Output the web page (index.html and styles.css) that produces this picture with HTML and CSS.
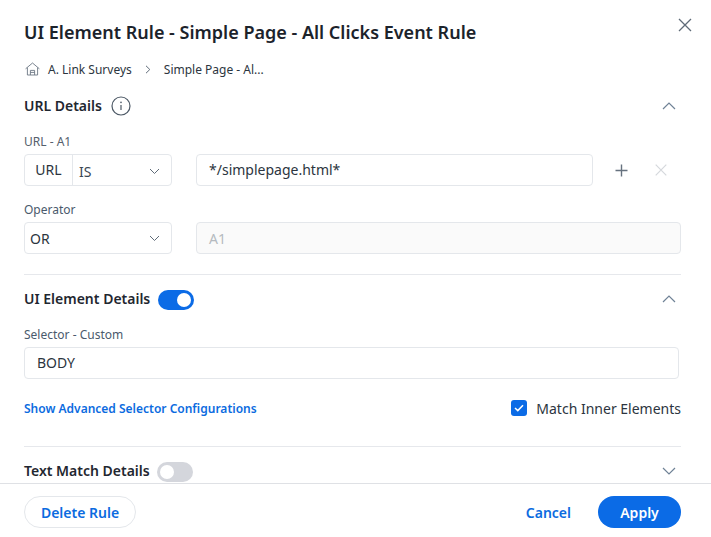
FILE: index.html
```html
<!DOCTYPE html>
<html lang="en">
<head>
<meta charset="utf-8">
<title>UI Element Rule</title>
<link rel="stylesheet" href="styles.css">
</head>
<body>
<div class="modal">
  <main class="content">
    <header class="head">
      <h1 class="title">UI Element Rule - Simple Page - All Clicks Event Rule</h1>
      <button class="close" aria-label="Close">
        <svg width="14" height="14" viewBox="0 0 14 14"><path d="M1 1l12 12M13 1L1 13" stroke="#5f6b78" stroke-width="1.3" fill="none"/></svg>
      </button>
    </header>
    <nav class="crumbs">
      <svg class="home" width="15" height="14" viewBox="0 0 15 14" fill="none" stroke="#6b7683" stroke-width="0.9"><path d="M0.6 6.8L7.5 1l6.9 5.8"/><path d="M2.4 5.6v7.4h10.2V5.6"/><path d="M5.4 13V8.4h4.2V13"/><path d="M5.4 10.4h4.2"/></svg>
      <span>A. Link Surveys</span>
      <svg class="crumb-sep" width="6" height="9" viewBox="0 0 6 9" fill="none" stroke="#5f6b78" stroke-width="1"><path d="M1 .8l3.8 3.7L1 8.2"/></svg>
      <span>Simple Page - Al...</span>
    </nav>

    <section class="section url-section">
      <div class="sec-head">
        <h2 class="sec-title">URL Details</h2>
        <svg class="info" width="20" height="20" viewBox="0 0 20 20" fill="none"><circle cx="10" cy="10" r="9" stroke="#4d5966" stroke-width="1.2"/><path d="M10 9v5" stroke="#4d5966" stroke-width="1.2"/><circle cx="10" cy="6.4" r=".8" fill="#4d5966"/></svg>
        <svg class="chev" width="14" height="8" viewBox="0 0 14 8" fill="none"><path d="M1 7l6-6 6 6" stroke="#6f8296" stroke-width="1.2"/></svg>
      </div>
      <label class="label first-label">URL - A1</label>
      <div class="row url-row">
        <div class="combo">
          <span class="combo-tag">URL</span>
          <span class="combo-value">IS<svg width="11" height="7" viewBox="0 0 11 7" fill="none"><path d="M1 1l4.5 4.5L10 1" stroke="#5f6b78" stroke-width="1"/></svg></span>
        </div>
        <div class="field url-field">*/simplepage.html*</div>
        <svg class="plus" width="13" height="13" viewBox="0 0 13 13" fill="none"><path d="M6.5 0.5v12M0.5 6.5h12" stroke="#66727f" stroke-width="1.4"/></svg>
        <svg class="remove" width="12" height="12" viewBox="0 0 12 12" fill="none"><path d="M.7.7l10.6 10.6M11.3.7L.7 11.3" stroke="#d5d8dc" stroke-width="1.2"/></svg>
      </div>
      <label class="label op-label">Operator</label>
      <div class="row">
        <div class="select">OR<svg width="11" height="7" viewBox="0 0 11 7" fill="none"><path d="M1 1l4.5 4.5L10 1" stroke="#5f6b78" stroke-width="1"/></svg></div>
        <div class="field disabled">A1</div>
      </div>
    </section>

    <section class="section ui-section">
      <div class="sec-head">
        <h2 class="sec-title">UI Element Details</h2>
        <span class="toggle on"><i></i></span>
        <svg class="chev" width="14" height="8" viewBox="0 0 14 8" fill="none"><path d="M1 7l6-6 6 6" stroke="#6f8296" stroke-width="1.2"/></svg>
      </div>
      <label class="label selector-label">Selector - Custom</label>
      <div class="field body-field">BODY</div>
      <div class="adv-row">
        <a class="adv-link">Show Advanced Selector Configurations</a>
        <label class="check">
          <span class="box"><svg width="10" height="8" viewBox="0 0 10 8" fill="none"><path d="M1 4l2.8 2.6L9 1.2" stroke="#fff" stroke-width="1.5"/></svg></span>
          Match Inner Elements
        </label>
      </div>
    </section>

    <section class="section text-section">
      <div class="sec-head">
        <h2 class="sec-title">Text Match Details</h2>
        <span class="toggle off"><i></i></span>
        <svg class="chev" width="14" height="8" viewBox="0 0 14 8" fill="none"><path d="M1 1l6 6 6-6" stroke="#6f8296" stroke-width="1.2"/></svg>
      </div>
    </section>
  </main>
  <footer class="foot">
    <button class="btn ghost">Delete Rule</button>
    <div class="foot-right">
      <button class="btn text">Cancel</button>
      <button class="btn primary">Apply</button>
    </div>
  </footer>
</div>
</body>
</html>
```
FILE: styles.css
```css
* { box-sizing: border-box; }
html, body { margin: 0; height: 100%; background: #fff; }
body { font-family: "Noto Sans", sans-serif; color: #1f2730; overflow: hidden; }
.modal { width: 711px; height: 537px; display: flex; flex-direction: column; }
.content { height: 483px; overflow: hidden; padding: 0 30px 0 24px; }
.head { display: flex; align-items: center; justify-content: space-between; height: 32px; margin-top: 16px; position: relative; }
.title { margin: 0; font-size: 18px; line-height: 32px; font-weight: 600; color: #1c232b; white-space: nowrap; }
.close { position: absolute; right: -11px; top: 2px; width: 14px; height: 14px; padding: 0; border: 0; background: none; display: flex; }
.crumbs { display: flex; align-items: center; height: 20px; margin-top: 11px; font-size: 12px; color: #2c3540; }
.home { margin: 0 8px 0 1px; }
.crumb-sep { margin: 0 13px 0 13px; }
.sec-head { display: flex; align-items: center; height: 24px; position: relative; }
.sec-title { margin: 0; font-size: 14px; font-weight: 600; line-height: 24px; color: #1f2730; }
.info { margin-left: 9px; }
.chev { position: absolute; right: 5px; top: 8px; }
.url-section { margin-top: 15px; }
.label { display: block; font-size: 12px; line-height: 16px; color: #4a5a6c; }
.first-label { margin-top: 16px; color: #55606c; }
.row { display: flex; align-items: center; margin-top: 4px; width: 657px; }
.op-label { margin-top: 16px; }
.combo { width: 148px; height: 32px; display: flex; border: 1px solid #e4e7eb; border-radius: 4px; flex: none; }
.combo-tag { width: 48px; flex: none; border-right: 1px solid #e4e7eb; font-size: 14px; line-height: 30px; text-align: center; color: #2c3540; }
.combo-value { flex: 1; display: flex; align-items: center; justify-content: space-between; padding: 2px 11px 0 6px; font-size: 14px; color: #3a4653; }
.select { width: 148px; height: 32px; flex: none; border: 1px solid #e4e7eb; border-radius: 4px; display: flex; align-items: center; justify-content: space-between; padding: 0 11px 0 5px; font-size: 14px; color: #2c3540; }
.field { height: 32px; border: 1px solid #e4e7eb; border-radius: 4px; padding: 0 12px; font-size: 14px; line-height: 30px; color: #2c3540; background: #fff; }
.url-field { width: 397px; margin-left: 24px; flex: none; }
.plus { margin-left: 22px; flex: none; }
.remove { margin-left: 27px; flex: none; }
.disabled { flex: 1; margin-left: 24px; background: #fafafa; color: #b5bac0; line-height: 31px; }
.ui-section { margin-top: 20px; border-top: 1px solid #e6e8ec; padding-top: 12px; height: 172px; }
.selector-label { margin-top: 16px; }
.body-field { margin-top: 4px; width: 655px; }
.toggle { width: 36px; height: 20px; border-radius: 10px; margin: 1px 0 0 8px; position: relative; flex: none; }
.toggle i { position: absolute; top: 3px; width: 14px; height: 14px; border-radius: 50%; background: #fff; }
.toggle.on { background: #0b6be6; }
.toggle.on i { right: 3px; }
.toggle.off { background: #d4d6dc; }
.toggle.off i { left: 3px; }
.adv-row { display: flex; align-items: center; justify-content: space-between; margin-top: 18px; height: 22px; width: 657px; }
.adv-link { font-size: 12px; font-weight: 600; color: #0b6be0; }
.check { display: flex; align-items: center; font-size: 14px; color: #2c3540; }
.box { width: 16px; height: 16px; border-radius: 3px; background: #0b6be6; display: flex; align-items: center; justify-content: center; margin-right: 9px; }
.text-section { border-top: 1px solid #e6e8ec; padding-top: 12px; }
.text-section .toggle { margin-left: 7px; }
.foot { height: 54px; border-top: 1px solid #dfe1e5; display: flex; justify-content: space-between; align-items: flex-start; padding: 12px 30px 0 24px; }
.foot-right { display: flex; align-items: center; }
.btn { height: 32px; border-radius: 16px; font-family: inherit; font-size: 14px; font-weight: 600; padding: 0; cursor: pointer; }
.ghost { width: 112px; background: #fff; border: 1px solid #e4e7eb; color: #0b6be0; }
.text { border: 0; background: none; color: #0b6be0; margin-right: 27px; }
.primary { width: 83px; border: 0; background: #0b6be6; color: #fff; }
```
